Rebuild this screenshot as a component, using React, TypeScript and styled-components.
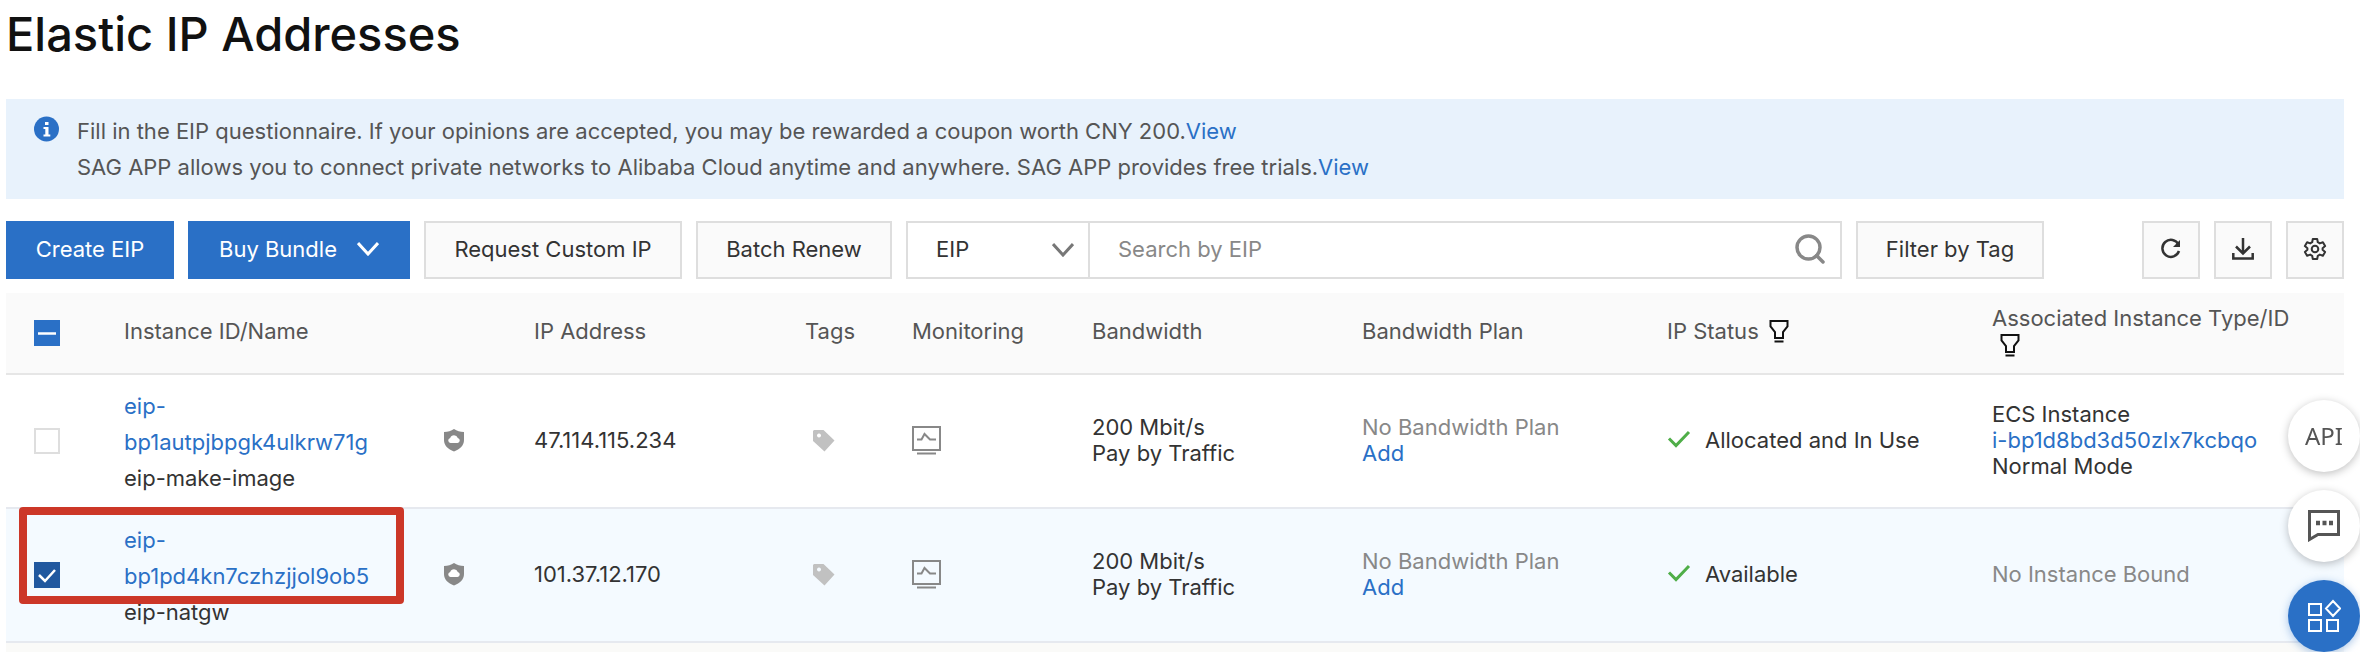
import React, { useState } from "react";
import styled, { createGlobalStyle, css } from "styled-components";

const blue = "#2a70c6";
const line = "#dedede";

const GlobalStyle = createGlobalStyle`
  *, *::before, *::after { box-sizing: border-box; }
  body {
    margin: 0;
    background: #fff;
    color: #333;
    font: 22px/26px Inter, "Liberation Sans", sans-serif;
  }
  button, input, select { font: inherit; color: inherit; }
  svg { display: block; }
`;

const Page = styled.main`
  display: flex;
  flex-direction: column;
  min-height: 100vh;
  padding: 0 16px 0 6px;
`;

const Title = styled.h1`
  margin: 0 0 31px;
  font-size: 47px;
  line-height: 68px;
  font-weight: 500;
  color: #111;
`;

const Link = styled.a`
  color: ${blue};
  text-decoration: none;
`;

const Notice = styled.section`
  display: flex;
  gap: 18px;
  padding: 14px 28px;
  background: #e8f2fc;
  color: #555;
  line-height: 36px;
  svg { margin-top: 3px; }
`;

const NoticeLine = styled.p`
  margin: 0;
`;

const Toolbar = styled.div`
  display: flex;
  gap: 14px;
  margin: 22px 0 14px;
`;

const Button = styled.button<{ $primary?: boolean; $width: number }>`
  display: flex;
  flex: none;
  align-items: center;
  justify-content: center;
  gap: 20px;
  width: ${(p) => p.$width}px;
  height: 58px;
  padding: 0 0 2px;
  border: 2px solid ${(p) => (p.$primary ? blue : line)};
  background: ${(p) => (p.$primary ? blue : "#fafafa")};
  color: ${(p) => (p.$primary ? "#fff" : "#333")};
  white-space: nowrap;
`;

const SearchGroup = styled.div`
  display: flex;
  flex: 1 1 936px;
  max-width: 936px;
  height: 58px;
  border: 2px solid ${line};
`;

const SelectBox = styled.label`
  display: flex;
  flex: none;
  align-items: center;
  width: 182px;
  border-right: 2px solid ${line};
  position: relative;
  svg { position: absolute; right: 14px; pointer-events: none; }
`;

const Select = styled.select`
  width: 100%;
  height: 100%;
  padding: 0 28px 2px;
  border: 0;
  background: transparent;
  appearance: none;
`;

const SearchInput = styled.input`
  flex: 1;
  min-width: 0;
  padding: 0 28px 2px;
  border: 0;
  background: transparent;
  &::placeholder { color: #888; opacity: 1; }
`;

const SearchButton = styled.button`
  display: flex;
  align-items: center;
  padding: 0 15px 2px;
  border: 0;
  background: transparent;
`;

const Tools = styled.div`
  display: flex;
  gap: 14px;
  margin-left: auto;
`;

const Table = styled.table`
  width: 100%;
  table-layout: fixed;
  border-collapse: separate;
  border-spacing: 0;
`;

const HeadCell = styled.th`
  height: 82px;
  padding: 0 24px 4px;
  border-bottom: 2px solid #e6e6e6;
  background: #fafafa;
  color: #555;
  font-weight: 400;
  text-align: left;
  white-space: nowrap;
`;

const Row = styled.tr<{ $selected?: boolean }>`
  background: ${(p) => (p.$selected ? "#f4faff" : "#fff")};
`;

const Cell = styled.td`
  height: 134px;
  padding: 0 24px 2px;
  border-bottom: 2px solid #e6e9ef;
`;

const CheckHead = styled(HeadCell)`
  padding: 0 28px;
`;

const CheckCell = styled(Cell)<{ $marked?: boolean }>`
  padding: 0 28px;
  position: relative;
  ${(p) => p.$marked && css`
    &::after {
      content: "";
      position: absolute;
      top: -2px;
      left: 13px;
      width: 385px;
      height: 97px;
      border: 8px solid #cc3728;
      border-radius: 4px;
      pointer-events: none;
    }
  `}
`;

const IdCell = styled(Cell)`
  padding: 2px 40px 0 24px;
  line-height: 36px;
`;

const IconCell = styled(Cell)`
  padding: 0 24px 3px;
`;

const Checkbox = styled.input`
  display: block;
  appearance: none;
  width: 26px;
  height: 26px;
  margin: 0;
  border: 2px solid ${line};
  background: #fff;
`;

const CheckWrap = styled.span<{ $tone?: string }>`
  display: grid;
  width: 26px;
  height: 26px;
  > * { grid-area: 1 / 1; }
  svg { pointer-events: none; z-index: 1; }
  ${Checkbox} {
    ${(p) => p.$tone && css`
      border-color: ${p.$tone};
      background: ${p.$tone};
    `}
  }
`;

const Muted = styled.span`
  color: #888;
`;

const TagButton = styled.button`
  display: block;
  margin: 0 0 0 8px;
  padding: 0;
  border: 0;
  background: none;
`;

const Status = styled.div`
  display: flex;
  align-items: center;
  gap: 14px;
  white-space: nowrap;
`;

const HeadLabel = styled.span<{ $stack?: boolean }>`
  display: flex;
  flex-direction: ${(p) => (p.$stack ? "column" : "row")};
  align-items: ${(p) => (p.$stack ? "flex-start" : "center")};
  gap: ${(p) => (p.$stack ? 2 : 10)}px;
  svg { margin-left: ${(p) => (p.$stack ? 8 : 0)}px; }
`;

const NextRow = styled.div`
  flex: 1;
  min-height: 9px;
  background: #fafaf8;
`;

const Floating = styled.nav`
  position: fixed;
  right: 0;
  bottom: 0;
  display: flex;
  flex-direction: column;
  gap: 18px;
`;

const RoundButton = styled.button<{ $primary?: boolean }>`
  display: flex;
  align-items: center;
  justify-content: center;
  width: 72px;
  height: 72px;
  padding: 0;
  border: 0;
  border-radius: 50%;
  background: ${(p) => (p.$primary ? blue : "#fff")};
  color: #555;
  font: 24px/30px "Noto Sans", sans-serif;
  box-shadow: 0 2px 8px ${(p) => (p.$primary ? "rgba(42,112,198,.4)" : "rgba(0,0,0,.25)")};
`;

const Chevron = ({ color }: { color: string }) => (
  <svg width="22" height="14" viewBox="0 0 22 14" fill="none" stroke={color} strokeWidth="3">
    <path d="M1 1l10 11L21 1" />
  </svg>
);

const Info = () => (
  <svg width="25" height="26" viewBox="0 0 25 26">
    <circle cx="12.5" cy="13" r="12.5" fill={blue} />
    <path d="M11 6h3.500v3H11zM9.500 11h5v7.500h1.800v2H9.500v-2h1.800V13H9.500z" fill="#fff" />
  </svg>
);

const Funnel = () => (
  <svg width="20" height="24" viewBox="0 0 20 24" fill="none" stroke="#111" strokeWidth="2">
    <path d="M1.500 2h17v5.500L14 13v6H6v-6L1.500 7.500zM5.500 22.500h9" />
  </svg>
);

const Shield = () => (
  <svg width="20" height="24" viewBox="0 0 20 24">
    <path d="M10 1c3 2 6 2.800 10 3v8c0 5.500-4 9-10 11.500C4 21 0 17.500 0 12V4c4-.2 7-1 10-3z" fill="#888" />
    <path d="M6.500 15a2.600 2.600 0 0 1-.3-5.100 4 4 0 0 1 7.600 0 2.600 2.600 0 0 1-.3 5.100z" fill="#fff" />
  </svg>
);

const Tag = () => (
  <svg width="22" height="24" viewBox="0 0 22 24">
    <path fillRule="evenodd" d="M0 3l1-1h9.500L21.500 12.500 11.500 23.500 0 13zM6 5.500a2 2 0 1 0 .01 0z" fill="#c1c1c1" />
  </svg>
);

const Monitor = () => (
  <svg width="29" height="30" viewBox="0 0 29 30" fill="none" stroke="#888" strokeWidth="2">
    <path d="M1 2h27v23H1zM5 28.500h19" />
    <path d="M5 14.500h4.500L12.500 9l5.500 5.500h6" />
  </svg>
);

const Tick = () => (
  <svg width="24" height="20" viewBox="0 0 24 20" fill="none" stroke="#4fae48" strokeWidth="3">
    <path d="M2 8.500l7 7L22 2" />
  </svg>
);

function StatusText({ children }: { children: React.ReactNode }) {
  return <Status><Tick />{children}</Status>;
}

function Check({ mark, label }: { mark?: "all" | "on"; label: string }) {
  const [on, setOn] = useState(!!mark);
  return (
    <CheckWrap $tone={on ? (mark === "all" ? blue : "#20589f") : undefined}>
      <Checkbox type="checkbox" aria-label={label} checked={on} onChange={() => setOn(!on)} />
      {on && (
        <svg width="26" height="26" viewBox="0 0 26 26" fill="none" stroke="#fff" strokeWidth="2.5">
          <path d={mark === "all" ? "M4 13.500h18" : "M5 13l6 6L21 8"} />
        </svg>
      )}
    </CheckWrap>
  );
}

const columns = [94, 320, 90, 271, 107, 180, 270, 305, 325];

const rows = [
  { id: "eip-bp1autpjbpgk4ulkrw71g", name: "eip-make-image", ip: "47.114.115.234", status: "Allocated and In Use", instance: "i-bp1d8bd3d50zlx7kcbqo" },
  { id: "eip-bp1pd4kn7czhzjjol9ob5", name: "eip-natgw", ip: "101.37.12.170", status: "Available", selected: true },
];

export default function App() {
  return (
    <Page>
      <GlobalStyle />
      <Title>Elastic IP Addresses</Title>
      <Notice>
        <Info />
        <div>
          <NoticeLine>
            Fill in the EIP questionnaire. If your opinions are accepted, you may be rewarded a coupon worth CNY 200.<Link href="#survey">View</Link>
          </NoticeLine>
          <NoticeLine>
            SAG APP allows you to connect private networks to Alibaba Cloud anytime and anywhere. SAG APP provides free trials.<Link href="#sag">View</Link>
          </NoticeLine>
        </div>
      </Notice>
      <Toolbar>
        <Button $primary $width={168}>Create EIP</Button>
        <Button $primary $width={222}>Buy Bundle<Chevron color="#fff" /></Button>
        <Button $width={258}>Request Custom IP</Button>
        <Button $width={196}>Batch Renew</Button>
        <SearchGroup>
          <SelectBox>
            <Select aria-label="Search field"><option>EIP</option></Select>
            <Chevron color="#777" />
          </SelectBox>
          <SearchInput aria-label="Search" placeholder="Search by EIP" />
          <SearchButton aria-label="Search">
            <svg width="30" height="30" viewBox="0 0 30 30" fill="none" stroke="#888" strokeWidth="3.5">
              <circle cx="13.5" cy="13.5" r="11.5" />
              <path d="M21.500 21.500L28 28" strokeLinecap="round" />
            </svg>
          </SearchButton>
        </SearchGroup>
        <Button $width={188}>Filter by Tag</Button>
        <Tools>
          <Button $width={58} aria-label="Refresh">
            <svg width="22" height="22" viewBox="0 0 22 22" fill="none" stroke="#333" strokeWidth="2.5">
              <path d="M18.500 6.500A8.500 8.500 0 1 0 19 13" />
              <path d="M20 2v7h-7z" fill="#333" stroke="none" />
            </svg>
          </Button>
          <Button $width={58} aria-label="Download">
            <svg width="22" height="24" viewBox="0 0 22 24" fill="none" stroke="#333" strokeWidth="2.5">
              <path d="M11 1v15M4 9.500l7 7 7-7M1.300 16v5.500h19.400V16" />
            </svg>
          </Button>
          <Button $width={58} aria-label="Settings">
            <svg width="24" height="24" viewBox="0 0 24 24" fill="none" stroke="#333" strokeWidth="2">
              <path d="M9.800 2h4.400l.6 3.200 2 1.200 3.100-1.100 2.200 3.800-2.500 2.100v1.600l2.500 2.100-2.200 3.800-3.100-1.100-2 1.200-.6 3.200H9.800l-.6-3.200-2-1.200-3.100 1.100-2.200-3.800 2.500-2.100v-1.600L1.900 9.100l2.200-3.800 3.100 1.100 2-1.200z" strokeLinejoin="round" />
              <circle cx="12" cy="12" r="3.3" />
            </svg>
          </Button>
        </Tools>
      </Toolbar>
      <Table>
        <colgroup>
          {columns.map((w, i) => <col key={i} width={w} />)}
          <col />
        </colgroup>
        <thead>
          <tr>
            <CheckHead><Check mark="all" label="Select all" /></CheckHead>
            <HeadCell>Instance ID/Name</HeadCell>
            <HeadCell />
            <HeadCell>IP Address</HeadCell>
            <HeadCell>Tags</HeadCell>
            <HeadCell>Monitoring</HeadCell>
            <HeadCell>Bandwidth</HeadCell>
            <HeadCell>Bandwidth Plan</HeadCell>
            <HeadCell><HeadLabel>IP Status<Funnel /></HeadLabel></HeadCell>
            <HeadCell><HeadLabel $stack>Associated Instance Type/ID<Funnel /></HeadLabel></HeadCell>
          </tr>
        </thead>
        <tbody>
          {rows.map((r) => (
            <Row key={r.id} $selected={r.selected}>
              <CheckCell $marked={r.selected}><Check mark={r.selected ? "on" : undefined} label={r.name} /></CheckCell>
              <IdCell><Link href="#eip">{r.id}</Link><br />{r.name}</IdCell>
              <IconCell><Shield /></IconCell>
              <Cell>{r.ip}</Cell>
              <IconCell><TagButton aria-label="Edit tags"><Tag /></TagButton></IconCell>
              <IconCell><Monitor /></IconCell>
              <Cell>200 Mbit/s<br />Pay by Traffic</Cell>
              <Cell><Muted>No Bandwidth Plan</Muted><br /><Link href="#plan">Add</Link></Cell>
              <Cell><StatusText>{r.status}</StatusText></Cell>
              <Cell>
                {r.instance
                  ? <>ECS Instance<br /><Link href="#ecs">{r.instance}</Link><br />Normal Mode</>
                  : <Muted>No Instance Bound</Muted>}
              </Cell>
            </Row>
          ))}
        </tbody>
      </Table>
      <NextRow />
      <Floating>
        <RoundButton>API</RoundButton>
        <RoundButton aria-label="Feedback">
          <svg width="32" height="32" viewBox="0 0 32 32" fill="none" stroke="#555" strokeWidth="3">
            <path d="M1.500 1.500h29v23H10l-8.500 5z" />
            <path d="M8 13h17" strokeWidth="4.5" strokeDasharray="4 2.5" />
          </svg>
        </RoundButton>
        <RoundButton $primary aria-label="Products">
          <svg width="34" height="34" viewBox="0 0 34 34" fill="none" stroke="#fff" strokeWidth="2">
            <path d="M2 5h12v11H2zM2 21h12v11H2zM20 21h11v11H20zM26 2l7 7.500-7 7.500-7-7.500z" />
          </svg>
        </RoundButton>
      </Floating>
    </Page>
  );
}
